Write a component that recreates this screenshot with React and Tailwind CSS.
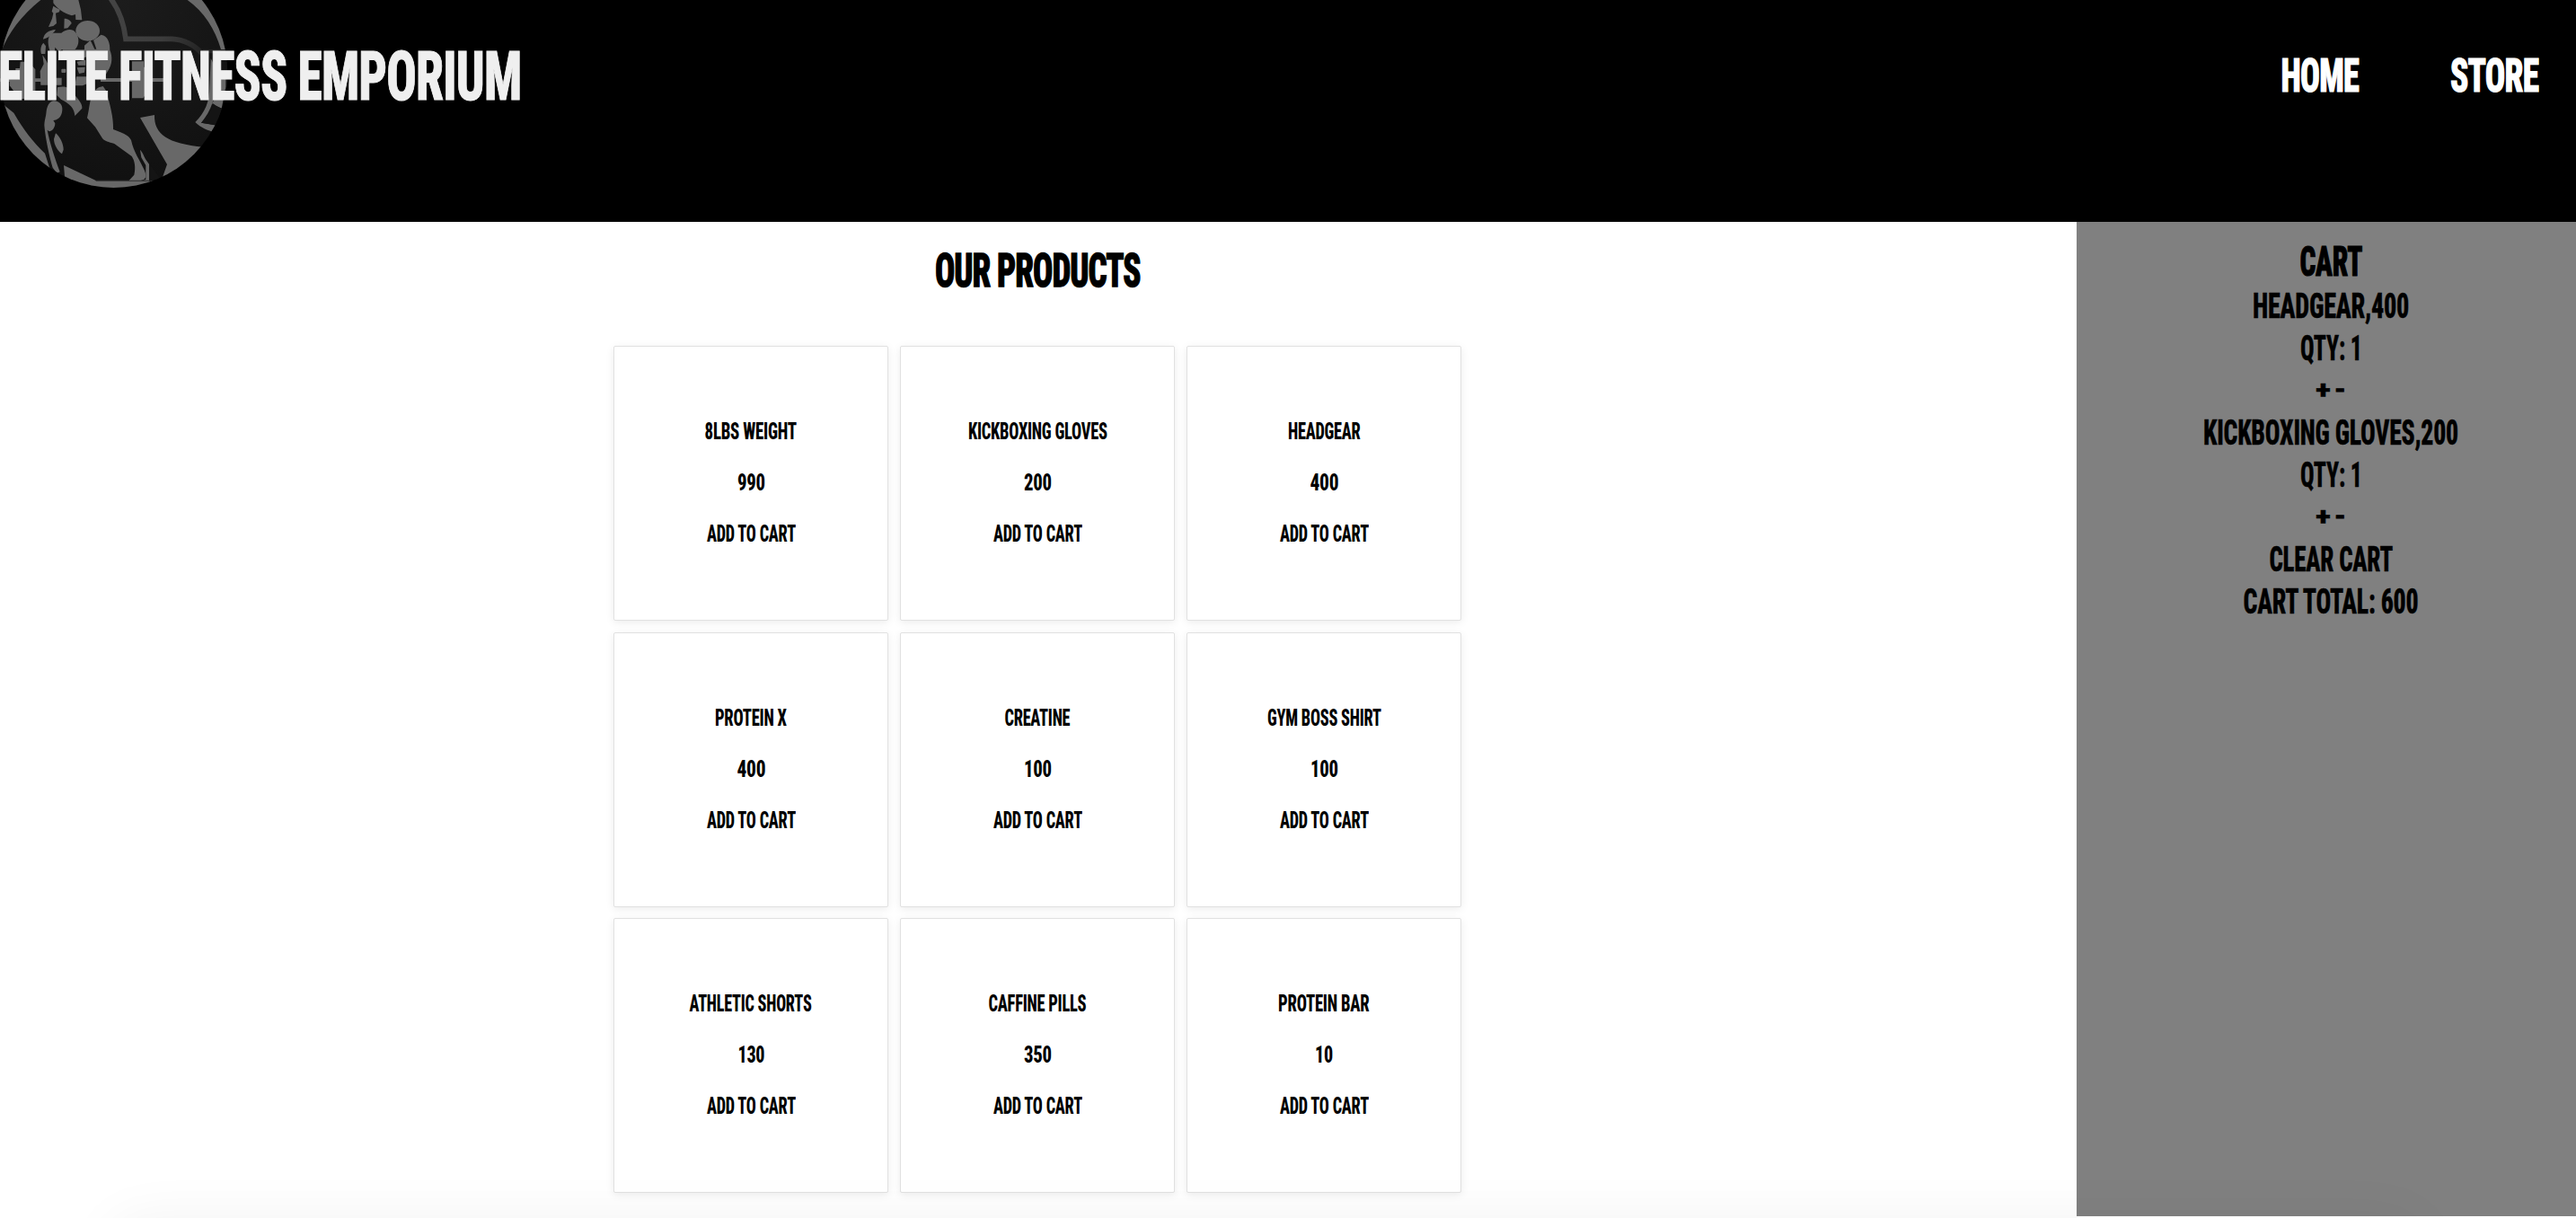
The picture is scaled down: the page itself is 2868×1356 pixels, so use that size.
import { useLayoutEffect, useRef, useState } from "react";

/* Condensed display text: the line is squeezed horizontally to the given width. */
function Display({ children, width, className = "" }) {
  const ref = useRef(null);
  const [scale, setScale] = useState(0.7);
  useLayoutEffect(() => {
    const natural = ref.current.offsetWidth;
    if (natural) setScale((width + 1) / natural);
  }, [children, width]);
  return (
    <span className={`flex justify-center ${className}`} style={{ width }}>
      <span
        ref={ref}
        className="shrink-0 origin-center whitespace-nowrap"
        style={{ transform: `scaleX(${scale})` }}
      >
        {children}
      </span>
    </span>
  );
}

const products = [
  { name: "8LBS WEIGHT", nameWidth: 101, price: "990", priceWidth: 30 },
  { name: "KICKBOXING GLOVES", nameWidth: 154, price: "200", priceWidth: 30 },
  { name: "HEADGEAR", nameWidth: 80, price: "400", priceWidth: 31 },
  { name: "PROTEIN X", nameWidth: 79, price: "400", priceWidth: 31 },
  { name: "CREATINE", nameWidth: 72, price: "100", priceWidth: 30 },
  { name: "GYM BOSS SHIRT", nameWidth: 126, price: "100", priceWidth: 30 },
  { name: "ATHLETIC SHORTS", nameWidth: 135, price: "130", priceWidth: 29 },
  { name: "CAFFINE PILLS", nameWidth: 108, price: "350", priceWidth: 30 },
  { name: "PROTEIN BAR", nameWidth: 100, price: "10", priceWidth: 19 },
];

const cartItems = [
  { label: "HEADGEAR,400", width: 173 },
  { label: "KICKBOXING GLOVES,200", width: 283 },
];

function Logo() {
  return (
    <svg className="absolute left-0 top-0" width="256" height="212" viewBox="0 0 768 636" aria-hidden="true">
      <defs>
        <clipPath id="disc">
          <ellipse cx="380" cy="243" rx="380" ry="384" />
        </clipPath>
        <radialGradient id="dark" gradientUnits="userSpaceOnUse" cx="400" cy="0" r="600">
          <stop offset="0" stopColor="#1c1c1c" />
          <stop offset="1" stopColor="#111111" />
        </radialGradient>
        <linearGradient id="outline" gradientUnits="userSpaceOnUse" x1="370" y1="0" x2="680" y2="180">
          <stop offset="0" stopColor="#444444" />
          <stop offset="0.6" stopColor="#3c3c3c" />
          <stop offset="1" stopColor="#222222" />
        </linearGradient>
      </defs>
      <g clipPath="url(#disc)">
        <rect width="768" height="636" fill="url(#dark)" />
        <g fill="#686868">
          {/* rim */}
          <path d="M60 0H136C72 52 28 108 3 176L-10 176V0Z" />
          <path d="M626 0H700L768 165H738C718 98 682 40 626 0Z" />
          <path d="M0 330L18 355L46 377C78 432 110 474 150 512L166 562L80 560L0 440Z" />
          <path d="M213 552L322 604H768V640H220Z" />
          {/* head and beard */}
          <path d="M178 0H262L270 32L274 67L253 66L252 48L240 52C214 46 190 28 178 10Z" />
          <path d="M178 20L188 26L200 32L198 40L186 44L189 78L178 87L162 90L174 62L178 44L173 38Z" />
          <path d="M215 62C228 62 238 70 239 78L226 94L214 95Z" />
          {/* shoulders, chest and arms */}
          <path d="M186 99C176 116 160 127 144 131C146 112 164 100 186 99Z" />
          <path d="M145 143L153 154L151 180H138C134 166 136 152 145 143Z" />
          <ellipse cx="293" cy="103" rx="40" ry="34" />
          <path d="M205 110C222 96 244 96 252 108C266 126 266 150 250 166H206L196 172L184 158L182 178H170C157 148 156 112 182 110Z" />
          <path d="M338 116C360 120 368 142 367 168C376 188 376 214 360 238L346 262H330L300 240L282 168L282 152L302 134L316 164H322L312 134Z" />
          <path d="M142 184C154 200 166 220 166 240V260H206V284H136L134 238L146 214Z" />
          {/* abdomen */}
          <path d="M210 166H285L290 190L270 196L252 198L248 176L236 200L204 192Z" />
          <path d="M257 206L286 200V218H262Z" />
          <path d="M257 226L284 224L282 242L264 246Z" />
          <rect x="205" y="230" width="15" height="13" rx="3" />
          {/* barbell */}
          <path d="M68 206H96L118 232V330H66L32 286V264H52V228H66Z" />
          <path d="M0 262H140V273H0Z" />
          <path d="M336 261H549V273H336Z" />
          <path d="M441 205H480V224H491V308L478 328H441Z" />
          <path d="M255 256H294V278L276 286H250Z" />
          {/* legs */}
          <path d="M192 292C216 286 236 292 248 314C262 334 276 346 274 362L250 387C248 362 234 346 204 332L190 318Z" />
          <path d="M180 337C200 338 210 352 208 368C206 392 192 400 178 402L184 412C184 428 174 438 164 439L158 434C166 478 184 530 200 574L190 578L176 560C164 520 152 460 149 428C146 408 152 396 154 380C156 352 166 338 180 337Z" />
          <path d="M186 445C200 456 212 480 212 500L207 514C192 504 180 482 180 464Z" />
          <path d="M344 288L354 302C366 344 380 392 378 432C404 442 430 450 438 468C446 508 468 536 482 568C488 582 490 594 480 600L460 606H428L448 584C454 560 450 536 440 522L382 480C362 474 350 472 342 462L318 424L291 394C302 352 298 310 330 292Z" />
          <path d="M468 500C476 508 480 520 486 532L498 548V606H468L487 600V552L472 526Z" />
          {/* cape and tail */}
          <path d="M468 393L516 384C514 448 560 480 680 491L640 560L540 600L558 549Z" />
          <path d="M704 196C716 214 722 240 722 266C722 320 706 370 672 410L716 418L722 418L710 440C682 432 664 420 652 408C684 376 700 340 700 290Z" />
          <path d="M728 200L740 240L754 264V290L740 362L708 346L722 320Z" />
        </g>
        <path d="M712 346C722 356 734 362 748 362L722 418L672 410C692 392 704 370 712 346Z" fill="#141414" />
        <path d="M498 546L534 594L498 607Z" fill="#141414" />
        <path
          d="M366 -10C400 34 414 78 420 130H574C612 132 646 146 676 180"
          fill="none"
          stroke="url(#outline)"
          strokeWidth="17"
        />
        <path d="M676 165H768V178H684Z" fill="#2b2b2b" opacity="0.8" />
        <path d="M320 604H500" stroke="#3a3a3a" strokeWidth="4" />
      </g>
    </svg>
  );
}

function ProductCard({ product }) {
  return (
    <article className="flex h-[306px] flex-col items-center rounded-[2px] border border-[#e1e1e1] bg-white pt-[66px] text-[26px] leading-[57px] shadow-[0_2px_10px_rgba(0,0,0,0.08)]">
      <Display width={product.nameWidth}>{product.name}</Display>
      <Display width={product.priceWidth}>{product.price}</Display>
      <button type="button" className="cursor-pointer">
        <Display width={98}>ADD TO CART</Display>
      </button>
    </article>
  );
}

export default function App() {
  return (
    <div className="relative flex h-[1356px] w-full flex-col overflow-hidden bg-white font-['Roboto_Condensed','Roboto',sans-serif] font-extrabold tracking-[-0.02em] text-black">
      <header className="relative flex h-[247px] shrink-0 items-start justify-between bg-black text-white">
        <Logo />
        <h1 className="relative mt-[45px] ml-[-1px] text-[76.5px] leading-[80px] tracking-[-0.015em] text-[#efefef] [-webkit-text-stroke:1px_#efefef]">
          <Display width={581}>ELITE FITNESS EMPORIUM</Display>
        </h1>
        <nav className="mt-[55px] mr-[42px] flex gap-[103px] text-[51px] leading-[60px] tracking-[-0.02em] [-webkit-text-stroke:1.2px_white]">
          <Display width={86}>HOME</Display>
          <Display width={97}>STORE</Display>
        </nav>
      </header>

      <div className="flex flex-1">
        <main className="flex w-[2312px] flex-col items-center">
          <h2 className="mt-[25px] mr-[2px] text-[51.5px] leading-[60px] tracking-[-0.025em] [-webkit-text-stroke:1.4px_black]">
            <Display width={228}>OUR PRODUCTS</Display>
          </h2>
          <section className="mt-[53px] mr-[2px] grid grid-cols-[306px_306px_306px] gap-x-[13px] gap-y-[12.6px]">
            {products.map((product) => (
              <ProductCard key={product.name} product={product} />
            ))}
          </section>
        </main>

        <aside className="flex h-[1107px] flex-1 flex-col items-center bg-[#808080] pt-[20px] pl-[10px] text-[38.5px] leading-[47px] [-webkit-text-stroke:0.4px_black]">
          <h3 className="text-[46px] leading-[48px] [-webkit-text-stroke:1.2px_black]">
            <Display width={69}>CART</Display>
          </h3>
          {cartItems.map((item) => (
            <div key={item.label} className="mt-[2px] mb-[-2px] flex flex-col items-center">
              <Display width={item.width}>{item.label}</Display>
              <Display width={68}>QTY: 1</Display>
              <div className="flex gap-[6px] text-[27px]">
                <Display width={15}>+</Display>
                <Display width={11} className="[-webkit-text-stroke:1px_black]">-</Display>
              </div>
            </div>
          ))}
          <div className="mt-[2px] flex flex-col items-center">
            <Display width={137}>CLEAR CART</Display>
            <Display width={194}>CART TOTAL: 600</Display>
          </div>
        </aside>
      </div>

      <div className="pointer-events-none absolute top-[1356px] right-[170px] left-[120px] h-[120px] rounded-[40px] shadow-[0_0_60px_rgba(0,0,0,0.05)]" />
    </div>
  );
}
